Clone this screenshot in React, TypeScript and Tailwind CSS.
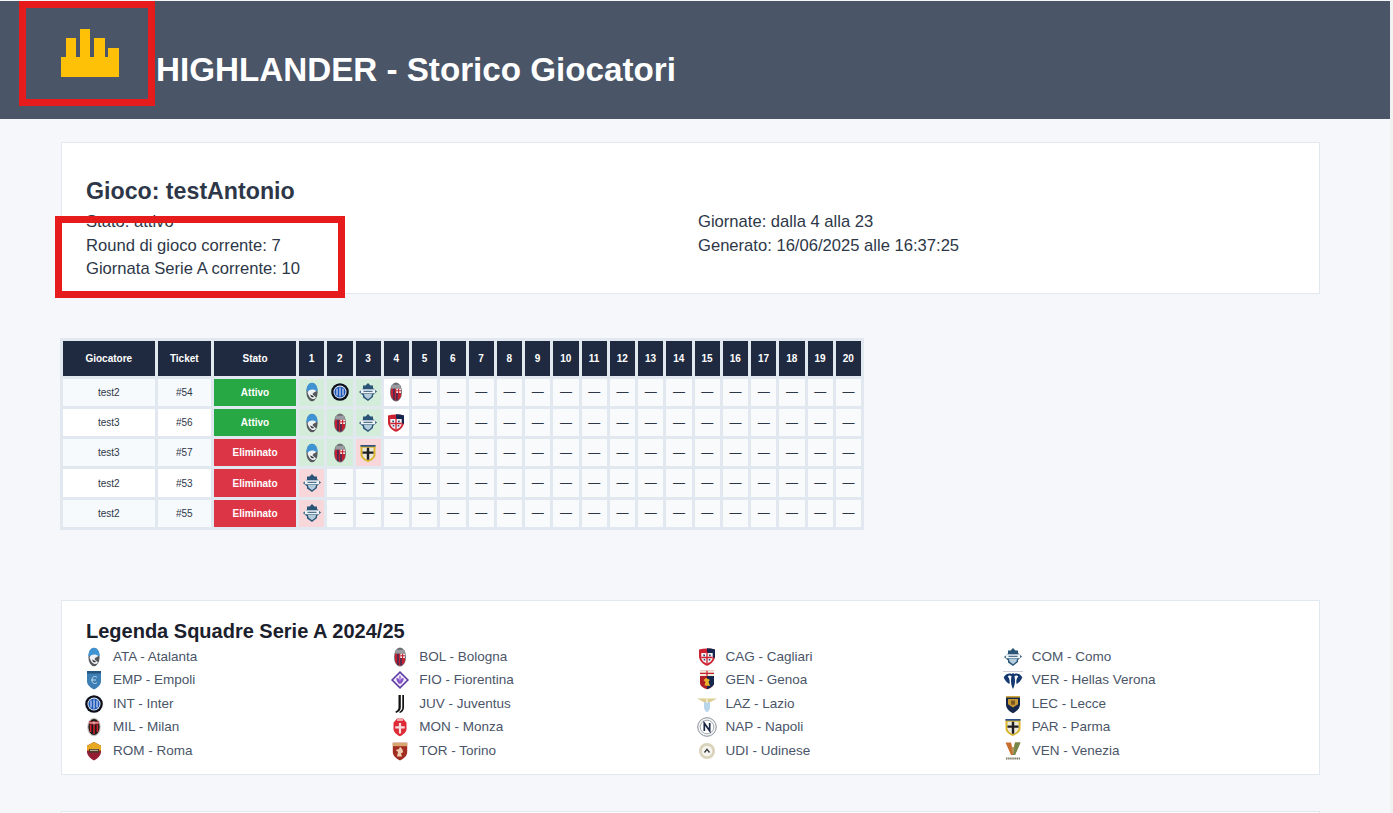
import React from 'react';

type Pick = { code: string; result: 'win' | 'lose' | 'pending' };

type PlayerRow = {
  name: string;
  ticket: string;
  active: boolean;
  picks: Pick[];
};

const rows: PlayerRow[] = [
  {
    name: 'test2',
    ticket: '#54',
    active: true,
    picks: [
      { code: 'ATA', result: 'win' },
      { code: 'INT', result: 'win' },
      { code: 'COM', result: 'win' },
      { code: 'BOL', result: 'pending' },
    ],
  },
  {
    name: 'test3',
    ticket: '#56',
    active: true,
    picks: [
      { code: 'ATA', result: 'win' },
      { code: 'BOL', result: 'win' },
      { code: 'COM', result: 'win' },
      { code: 'CAG', result: 'pending' },
    ],
  },
  {
    name: 'test3',
    ticket: '#57',
    active: false,
    picks: [
      { code: 'ATA', result: 'win' },
      { code: 'BOL', result: 'win' },
      { code: 'PAR', result: 'lose' },
    ],
  },
  { name: 'test2', ticket: '#53', active: false, picks: [{ code: 'COM', result: 'lose' }] },
  { name: 'test2', ticket: '#55', active: false, picks: [{ code: 'COM', result: 'lose' }] },
];

const teams = [
  ['ATA', 'Atalanta'],
  ['BOL', 'Bologna'],
  ['CAG', 'Cagliari'],
  ['COM', 'Como'],
  ['EMP', 'Empoli'],
  ['FIO', 'Fiorentina'],
  ['GEN', 'Genoa'],
  ['VER', 'Hellas Verona'],
  ['INT', 'Inter'],
  ['JUV', 'Juventus'],
  ['LAZ', 'Lazio'],
  ['LEC', 'Lecce'],
  ['MIL', 'Milan'],
  ['MON', 'Monza'],
  ['NAP', 'Napoli'],
  ['PAR', 'Parma'],
  ['ROM', 'Roma'],
  ['TOR', 'Torino'],
  ['UDI', 'Udinese'],
  ['VEN', 'Venezia'],
];

const rounds = Array.from({ length: 20 }, (_, i) => i + 1);

const pickStyles: Record<Pick['result'], string> = {
  win: 'bg-[#d4edda]',
  lose: 'bg-[#f8d7da]',
  pending: 'bg-white',
};

const CrestShape = ({ code }: { code: string }) => {
  switch (code) {
    case 'ATA':
      return (
        <>
          <ellipse cx="10" cy="10" rx="5.6" ry="9.2" fill="#55595e" />
          <path d="M4.4 9C4.4 3.8 7 .8 10 .8S15.6 3.8 15.6 9z" fill="#3f93d2" />
          <path d="M5.5 10c2-3.200 6.500-3.200 9-1-1 1-3 1-4 3 1 2 3 2 3.500 4-3 2.500-7 .5-8.500-6z" fill="#eef1f3" />
          <path d="M8 12.5c1.500 1 3 1 4 2.500-1.500.8-3 .2-4-2.500z" fill="#2b2f33" />
        </>
      );
    case 'INT':
      return (
        <>
          <circle cx="10" cy="10" r="8.8" fill="#0b0f1c" />
          <circle cx="10" cy="10" r="6.5" fill="#f2f5fa" />
          <circle cx="10" cy="10" r="5.6" fill="#1c56b8" />
          <path d="M7 6.500v7M10 5.500v9M13 6.500v7" stroke="#f2f5fa" strokeWidth="1" fill="none" />
        </>
      );
    case 'COM':
      return (
        <>
          <path d="M10 1l2.500 2.500h2.500v2.500l4 3.500-4 3.500v2L10 19l-5-3.500v-2l-4-3.500 4-3.500V3.500h2.500z" fill="#2a5577" />
          <path d="M2.800 7.300h14.400v4H2.800z" fill="#eef3f6" />
          <path d="M5.800 11.800h8.400l-.9 3L10 17.200l-3.300-2.400z" fill="#b4cbdc" />
          <path d="M5.500 9.300h9" stroke="#2a5577" strokeWidth="1" />
        </>
      );
    case 'BOL':
      return (
        <>
          <ellipse cx="10" cy="10" rx="6" ry="9.500" fill="#6b6c72" />
          <path d="M5 6.500h10V14c-1 3-3.500 4.500-5 4.500S6 17 5 14z" fill="#c4202f" />
          <path d="M7.300 6.500h1.300v11.500H7.300z" fill="#22305f" />
          <path d="M10.300 6.500h4.700v4.500h-4.700z" fill="#f4eeee" />
          <path d="M12.600 6.500V11M10.300 8.700h4.700" stroke="#c4202f" strokeWidth="1.100" />
          <path d="M10.300 11h1.300v7.300h-1.300z" fill="#22305f" />
          <path d="M6.300 2.800h7.400l1.300 3.700H5z" fill="#9a9ca2" />
        </>
      );
    case 'CAG':
      return (
        <>
          <path d="M2 2.500Q10 .3 18 2.500V9c0 4.500-3.800 8.300-8 9.800C5.800 17.300 2 13.500 2 9z" fill="#cc2231" />
          <path d="M10 1.200q4.300 0 8 1.300V9c0 .8-.1 1.500-.3 2.200L10 5z" fill="#16264f" />
          <path d="M4.300 6h11.400v4.500c0 2.800-2.700 5-5.700 6-3-1-5.700-3.200-5.700-6z" fill="#f4f4f6" />
          <path d="M10 6v10.500M4.300 10.500h11.400" stroke="#cc2231" strokeWidth="1.300" />
          <path d="M6.300 7.500h1.700v1.700H6.300zM12 7.500h1.700v1.700H12zM6.700 12h1.600v1.600H6.700zM11.700 12h1.600v1.600h-1.600z" fill="#3c4a78" />
        </>
      );
    case 'PAR':
      return (
        <>
          <path d="M2.500 2h15v9.500c0 3.500-3.800 6-7.500 7.500-3.700-1.500-7.500-4-7.500-7.500z" fill="#d9b52c" />
          <path d="M4.500 4.800h11v6.400c0 2.800-2.800 4.800-5.500 6-2.700-1.200-5.500-3.200-5.500-6z" fill="#ece9dc" />
          <path d="M8.800 4.800h2.400v12H8.800zM4.500 8.500h11v2.200h-11z" fill="#1e1e20" />
          <path d="M2.500 2h15v1.700h-15z" fill="#2c4f8a" />
        </>
      );
    case 'EMP':
      return (
        <>
          <path d="M3 1h14v10c0 4-3.300 6.800-7 8.500C6.300 17.800 3 15 3 11z" fill="#3d7fb5" />
          <path d="M3 1h14v2.500H3z" fill="#26567f" />
          <path d="M13 7.500c-2-2-5-1-5 2.500s3 4.500 5 2.500M7 10h5" stroke="#bcd8ec" strokeWidth="1" fill="none" />
        </>
      );
    case 'MIL':
      return (
        <>
          <ellipse cx="10" cy="10" rx="6.800" ry="9.200" fill="#c9c3c0" />
          <ellipse cx="10" cy="10" rx="5.600" ry="8" fill="#1a1a1a" />
          <path d="M5.800 8h1.600v7H5.800zM9.200 8h1.600v9H9.200zM12.600 8h1.600v7h-1.600z" fill="#d0202c" />
          <path d="M5.300 4.300h9.400v3.200H5.300z" fill="#c2242e" />
          <path d="M10 4.300v3.200M5.300 5.900h9.400" stroke="#f1ecec" strokeWidth=".8" />
        </>
      );
    case 'ROM':
      return (
        <>
          <path d="M10 1l7 3.800V11c0 3.500-3.800 6.800-7 8.400C6.800 17.800 3 14.500 3 11V4.800z" fill="#941d33" />
          <path d="M10 1l7 3.800V9.500H3V4.800z" fill="#e7a822" />
          <path d="M5 8h10v3.800H5z" fill="#4c3a2b" />
          <path d="M6 9.300h8" stroke="#d8c9a8" strokeWidth="1" />
        </>
      );
    case 'FIO':
      return (
        <>
          <path d="M10 1L19 10 10 19 1 10z" fill="#5b3a9f" />
          <path d="M10 3.200L16.800 10 10 16.800 3.200 10z" fill="#efeaf7" />
          <path d="M10 5c1.100 1.600.9 3.200 0 5-.9-1.800-1.100-3.400 0-5zM6.300 8c2.200 0 3.200 1 3.700 3v3C7.800 13.500 6.300 10.700 6.300 8zM13.700 8c-2.200 0-3.200 1-3.700 3v3c2.200-.5 3.700-3.300 3.700-6z" fill="#8752c7" />
        </>
      );
    case 'JUV':
      return (
        <path
          d="M8.500 1h2.300v12.500c0 2.500-1.700 4.300-4.800 5.500l-.6-1.500c2.100-.9 3.100-1.900 3.100-3.900zM12.300 1h1.700v12.500c0 2.700-1.700 4.600-4.100 5.600l-.7-1.100c2-1 3.100-2.300 3.100-4.400z"
          fill="#111"
        />
      );
    case 'MON':
      return (
        <>
          <path d="M5 4l2-2.500h6L15 4l1.500 1.500V12c0 3-3.300 5.800-6.500 7.300C6.800 17.800 3.500 15 3.500 12V5.500z" fill="#de2b36" />
          <path d="M8.900 6h2.200v10.500H8.900zM5.300 9.300h9.400v2.200H5.300z" fill="#f6dfe0" />
          <path d="M7 1.500h6v2.500H7z" fill="#f1a7ab" />
        </>
      );
    case 'TOR':
      return (
        <>
          <path d="M2.800 1.800h14.400V11c0 4-3.600 6.800-7.200 8.400-3.600-1.600-7.200-4.400-7.200-8.400z" fill="#a12c20" />
          <path d="M2.800 1.800h14.400v3.400H2.800z" fill="#d8a66f" />
          <path d="M7 15.500l1-4.500-2.200-2 3.200-1 1-2.200 2.200 2.200 1 3.200-2.200 1 1 3.300z" fill="#eecdb0" />
        </>
      );
    case 'GEN':
      return (
        <>
          <path d="M3 .8h14V13c0 3-3.300 5.200-7 6.300C6.300 18.200 3 16 3 13z" fill="#b01f26" />
          <path d="M10 6h7v7c0 3-3.300 5.200-7 6.300z" fill="#17284f" />
          <path d="M3 .8h14V6H3z" fill="#f1ecdc" />
          <path d="M10 .8V6M3 3.400h14" stroke="#c8202c" strokeWidth="1.200" />
          <path d="M7.500 15.500l1-3.500-2-2 2.500-2 2 1 2 1-1.500 1.500 1.500 4.500z" fill="#e9b32b" />
        </>
      );
    case 'LAZ':
      return (
        <>
          <path d="M0 4.500h20l-7 3.800H7z" fill="#dccd92" />
          <path d="M7 8h6v5.500c0 2-1.500 3.800-3 4.800-1.500-1-3-2.800-3-4.800z" fill="#b8d6ea" />
          <path d="M10 4v5" stroke="#efe8c8" strokeWidth="2" />
        </>
      );
    case 'NAP':
      return (
        <>
          <circle cx="10" cy="10" r="9.300" fill="#f4f5f6" stroke="#8a9097" strokeWidth="1" />
          <circle cx="10" cy="10" r="6.800" fill="#fff" stroke="#a8adb3" strokeWidth="1" />
          <path d="M7.300 14V6.200L12.700 13.800V6" stroke="#1d2a44" strokeWidth="1.700" fill="none" />
        </>
      );
    case 'UDI':
      return (
        <>
          <circle cx="10" cy="10" r="8" fill="#d9d3bb" />
          <circle cx="10" cy="10" r="5.300" fill="#f5f4ef" />
          <path d="M7.500 11.500L10 8.300l2.500 3.200" stroke="#33363a" strokeWidth="1.300" fill="none" />
        </>
      );
    case 'VER':
      return (
        <>
          <path d="M0 1.500h20" stroke="#c9ced6" strokeWidth="1" />
          <path d="M10 19c-2-4-2.500-8-1.500-13C6.800 5 5.500 5.200 4.800 6.800c1.500 1 2.300 4 1.700 7.200-1.500-.8-4.800-3.300-5.800-6.800C3 3.500 6.500 3 8.800 4L10 3l1.200 1c2.300-1 5.800-.5 8.100 3.200-1 3.500-4.300 6-5.800 6.800-.6-3.200.2-6.200 1.700-7.200C14.500 5.200 13.200 5 11.500 6c1 5 .5 9-1.500 13z" fill="#14386f" />
        </>
      );
    case 'LEC':
      return (
        <>
          <path d="M3 2h14v8.500c0 4-3.300 6.800-7 8.800-3.700-2-7-4.800-7-8.800z" fill="#14264a" />
          <path d="M5 5h10v5.300l-5 3.300-5-3.300z" fill="#c79a34" />
          <path d="M8 6.500h4v4.200H8z" fill="#7b5a22" />
          <path d="M3 2h14v1.600H3z" fill="#d0a640" />
        </>
      );
    case 'VEN':
      return (
        <>
          <path d="M2.500 1.500h5.500l2 8.500 2-8.500h5.500L12 14H8z" fill="#c96f2d" />
          <path d="M12 1.500h5.500L12 14h-2z" fill="#6f8a4a" />
          <path d="M8.200 6h3.600l-1 6.500H9.200z" fill="#b3925c" />
          <path d="M3 17.500h14" stroke="#7d7a68" strokeWidth="2" strokeDasharray="1.500 .6" />
        </>
      );
    default:
      return null;
  }
};

const Crest = ({ code }: { code: string }) => (
  <svg viewBox="0 0 20 20" className="block h-5 w-5 shrink-0" aria-hidden="true">
    <CrestShape code={code} />
  </svg>
);

const Logo = () => (
  <svg viewBox="0 0 58 48" className="h-[48px] w-[58px] shrink-0" aria-hidden="true">
    <path d="M0 48V28h5V9h10v19h4V0h10v28h4V9h11v19h3V19h11v29z" fill="#ffc107" />
  </svg>
);

const headCell = 'bg-[#1f2a40] text-center text-[10px] font-bold text-white';
const bodyCell = 'text-center text-[10px] text-[#2d3748]';

const HistoryTable = () => (
  <table className="-ml-px table-fixed w-[804px] border-separate [border-spacing:3px] bg-[#e2e8f0]">
    <colgroup>
      <col className="w-[91.5px]" />
      <col className="w-[53.5px]" />
      <col className="w-[82px]" />
      {rounds.map((round) => (
        <col key={round} className="w-[25.25px]" />
      ))}
    </colgroup>
    <thead>
      <tr className="h-[34.6px]">
        <th className={headCell}>Giocatore</th>
        <th className={headCell}>Ticket</th>
        <th className={headCell}>Stato</th>
        {rounds.map((round) => (
          <th key={round} className={headCell}>
            {round}
          </th>
        ))}
      </tr>
    </thead>
    <tbody>
      {rows.map((row, idx) => (
        <tr key={row.ticket} className="h-[27.3px]">
          <td className={`${bodyCell} ${idx % 2 === 0 ? 'bg-[#f7fafc]' : 'bg-white'}`}>{row.name}</td>
          <td className={`${bodyCell} ${idx % 2 === 0 ? 'bg-[#f7fafc]' : 'bg-white'}`}>{row.ticket}</td>
          <td className={`text-center text-[10px] font-bold text-white ${row.active ? 'bg-[#28a745]' : 'bg-[#dc3545]'}`}>
            {row.active ? 'Attivo' : 'Eliminato'}
          </td>
          {rounds.map((round) => {
            const pick = row.picks[round - 1];
            if (!pick) {
              return (
                <td key={round} className="bg-[#f8fafb] text-center text-[12px] text-[#2d3748]">
                  —
                </td>
              );
            }
            return (
              <td key={round} className={pickStyles[pick.result]}>
                <div className="flex justify-center">
                  <Crest code={pick.code} />
                </div>
              </td>
            );
          })}
        </tr>
      ))}
    </tbody>
  </table>
);

export default function App() {
  return (
    <div className="relative flex h-[813px] w-[1393px] overflow-hidden bg-[#f5f7fb] font-['Liberation_Sans',Arial,sans-serif]">
      <div className="w-[1390px] pt-px">
        <header className="flex h-[118px] items-start bg-[#4a5568] pl-[61px]">
          <div className="mt-[28px]">
            <Logo />
          </div>
          <h1 className="ml-[37px] mt-[49px] text-[33.2px] font-bold leading-[40px] text-white">
            HIGHLANDER - Storico Giocatori
          </h1>
        </header>

        <main className="ml-[61px] w-[1259px]">
          <section className="mt-[23px] h-[152px] border border-[#e2e8f0] bg-white px-6 pt-[34px]">
            <h2 className="text-[23.2px] font-bold leading-[28px] text-[#2d3748]">Gioco: testAntonio</h2>
            <div className="mt-[5px] grid grid-cols-2 gap-x-[15px] text-[16.6px] leading-[23.5px] text-[#2d3748]">
              <div>
                <p>Stato: attivo</p>
                <p>Round di gioco corrente: 7</p>
                <p>Giornata Serie A corrente: 10</p>
              </div>
              <div>
                <p>Giornate: dalla 4 alla 23</p>
                <p>Generato: 16/06/2025 alle 16:37:25</p>
              </div>
            </div>
          </section>

          <div className="mt-[44px]">
            <HistoryTable />
          </div>

          <section className="mt-[69.5px] h-[175px] border border-[#e2e8f0] bg-white px-6 pt-[18px]">
            <h3 className="text-[20px] font-bold leading-[24px] text-[#1a202c]">Legenda Squadre Serie A 2024/25</h3>
            <div className="mt-[2.3px] grid grid-cols-4 auto-rows-[23.5px] gap-x-4">
              {teams.map(([code, name]) => (
                <div key={code} className="flex items-center">
                  <div className="-ml-[2px] mr-[9px]">
                    <Crest code={code} />
                  </div>
                  <span className="text-[13.5px] text-[#4a5568]">
                    {code} - {name}
                  </span>
                </div>
              ))}
            </div>
          </section>

          <section className="mt-[36px] h-[60px] border border-[#e2e8f0] bg-white" />
        </main>
      </div>
      <div className="w-[3px] bg-[#f1f1f1]" />

      <div className="absolute left-[19px] top-px h-[105px] w-[136px] border-[7px] border-[#e61b1b]" />
      <div className="absolute left-[55px] top-[216px] h-[82px] w-[290px] border-[7px] border-[#e61b1b]" />
    </div>
  );
}
